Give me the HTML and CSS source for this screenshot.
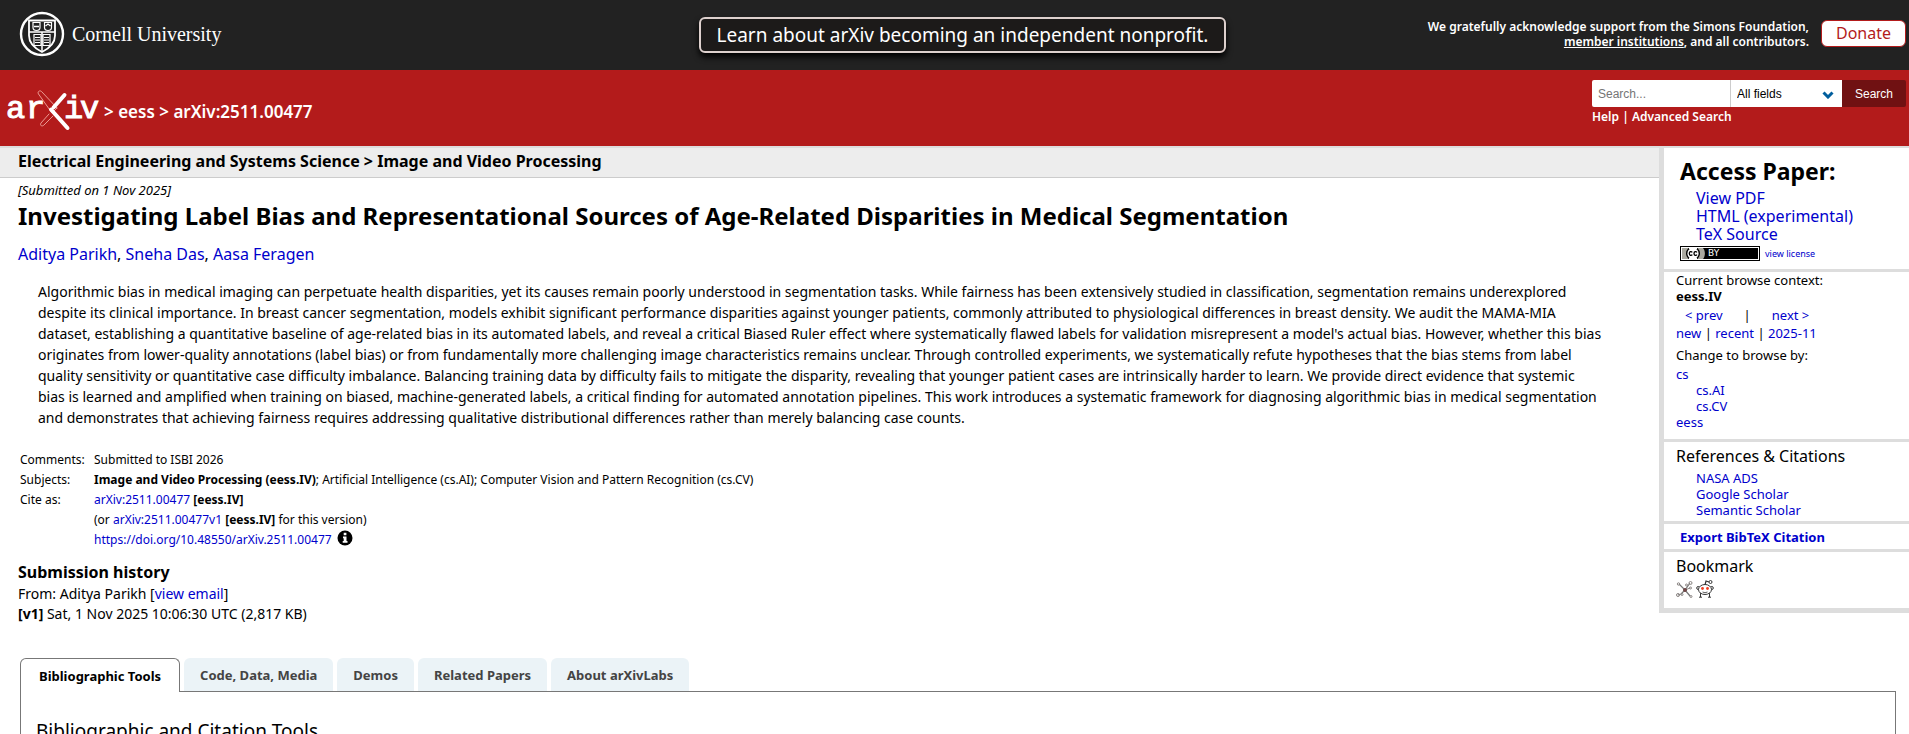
FILE: index.html
```
<!DOCTYPE html>
<html lang="en">
<head>
  <meta charset="utf-8">
  <title>[2511.00477] Investigating Label Bias and Representational Sources of Age-Related Disparities in Medical Segmentation</title>
  <link rel="stylesheet" href="styles.css">
</head>
<body>
  <header>
    <div class="support-bar">
      <a class="cornell" href="#">
        <svg width="46" height="46" viewBox="0 0 46 46" fill="none" stroke="#fff">
          <circle cx="23" cy="23" r="21" stroke-width="2.4"/>
          <path d="M10 9.500h26v15c0 7-5 12.500-13 16.500c-8-4-13-9.500-13-16.500z" stroke-width="1.800"/>
          <path d="M10 21h26M23 21v20" stroke-width="1.500"/>
          <path d="M14 11.500h7v5c0 2-1.500 3-3.500 3s-3.500-1-3.500-3zM25.500 11.500h7v5c0 2-1.500 3-3.500 3s-3.500-1-3.500-3z" stroke-width="1.200"/>
          <path d="M15 15.500h5M26.500 15l2.500-2l2.500 2" stroke-width="1.300"/>
          <path d="M15 23.500h7v11h-7zM24 23.500h7v11h-7z" stroke-width="1.200"/>
          <path d="M16 26.500h5M16 29h5M16 31.500h5M25 26.500h5M25 29h5M25 31.500h5" stroke-width="1"/>
        </svg>
        <span>Cornell University</span>
      </a>
      <a class="banner" href="#">Learn about arXiv becoming an independent nonprofit.</a>
      <div class="support">
        <p>We gratefully acknowledge support from the Simons Foundation,<br><a href="#">member institutions</a>, and all contributors.</p>
        <a class="donate" href="#">Donate</a>
      </div>
    </div>

    <div class="identity">
      <div class="breadcrumbs">
        <a href="#" aria-label="arXiv">
          <svg class="logo" width="92" height="44" viewBox="0 0 92 44">
            <g class="logo-text">
              <text x="-1" y="30">a</text>
              <text x="19" y="30">r</text>
              <text x="57" y="30">i</text>
              <text x="73" y="30">v</text>
            </g>
            <g fill="none" stroke="#fff" stroke-linecap="round">
              <path d="M50 20l-5 5L31.500 6c-1.500-2.500 1.500-4 3-2.500L50 20M42 26l-8 9c-1.500 2.500 1 4 3 2L46 28" stroke="#f0a8a0" stroke-width="0.900"/>
              <path d="M57.500 7L46.500 19.500" stroke-width="4"/>
              <path d="M44 21.500L60.500 40" stroke-width="4"/>
            </g>
          </svg>
        </a>
        <span>&gt; <a href="#">eess</a> &gt; arXiv:2511.00477</span>
      </div>
      <form class="search">
        <div class="search-row">
          <input type="text" placeholder="Search..." aria-label="Search term or terms">
          <div class="select">
            <select aria-label="Field to search">
              <option>All fields</option>
              <option>Title</option>
              <option>Author</option>
              <option>Abstract</option>
            </select>
            <svg width="12" height="8" viewBox="0 0 12 8"><path d="M1.500 1.500l4.500 4.500l4.500-4.500" fill="none" stroke="#005e9d" stroke-width="3"/></svg>
          </div>
          <button type="button">Search</button>
        </div>
        <p><a href="#">Help</a> | <a href="#">Advanced Search</a></p>
      </form>
    </div>
  </header>

  <div class="content">
    <main>
      <div class="subheader"><h1>Electrical Engineering and Systems Science &gt; Image and Video Processing</h1></div>
      <article>
        <div class="dateline">[Submitted on 1 Nov 2025]</div>
        <h1 class="title">Investigating Label Bias and Representational Sources of Age-Related Disparities in Medical Segmentation</h1>
        <div class="authors"><a href="#">Aditya Parikh</a>, <a href="#">Sneha Das</a>, <a href="#">Aasa Feragen</a></div>
        <blockquote class="abstract">
          Algorithmic bias in medical imaging can perpetuate health disparities, yet its causes remain poorly understood in segmentation tasks. While fairness has been extensively studied in classification, segmentation remains underexplored despite its clinical importance. In breast cancer segmentation, models exhibit significant performance disparities against younger patients, commonly attributed to physiological differences in breast density. We audit the MAMA-MIA dataset, establishing a quantitative baseline of age-related bias in its automated labels, and reveal a critical Biased Ruler effect where systematically flawed labels for validation misrepresent a model's actual bias. However, whether this bias originates from lower-quality annotations (label bias) or from fundamentally more challenging image characteristics remains unclear. Through controlled experiments, we systematically refute hypotheses that the bias stems from label quality sensitivity or quantitative case difficulty imbalance. Balancing training data by difficulty fails to mitigate the disparity, revealing that younger patient cases are intrinsically harder to learn. We provide direct evidence that systemic bias is learned and amplified when training on biased, machine-generated labels, a critical finding for automated annotation pipelines. This work introduces a systematic framework for diagnosing algorithmic bias in medical segmentation and demonstrates that achieving fairness requires addressing qualitative distributional differences rather than merely balancing case counts.
        </blockquote>
        <table class="metatable">
          <tr><td class="label">Comments:</td><td>Submitted to ISBI 2026</td></tr>
          <tr><td class="label">Subjects:</td><td><b>Image and Video Processing (eess.IV)</b>; Artificial Intelligence (cs.AI); Computer Vision and Pattern Recognition (cs.CV)</td></tr>
          <tr><td class="label">Cite as:</td><td><a href="#">arXiv:2511.00477</a> <b>[eess.IV]</b></td></tr>
          <tr><td></td><td>(or <a href="#">arXiv:2511.00477v1</a> <b>[eess.IV]</b> for this version)</td></tr>
          <tr><td></td><td><a href="#">https://doi.org/10.48550/arXiv.2511.00477</a>
            <svg class="info" width="16" height="16" viewBox="0 0 16 16"><circle cx="8" cy="8" r="7.500"/><path d="M6.700 2.800h2.700v2.400H6.700zM6 6.500h3.500v4.500h1v1.800H5.700V11h1V8.300H6z" fill="#fff"/></svg></td></tr>
        </table>
        <section class="history">
          <h2>Submission history</h2>
          <p>From: Aditya Parikh [<a href="#">view email</a>]</p>
          <p><b>[v1]</b> Sat, 1 Nov 2025 10:06:30 UTC (2,817 KB)</p>
        </section>
      </article>
    </main>

    <aside>
      <section class="access">
        <h2>Access Paper:</h2>
        <ul>
          <li><a href="#">View PDF</a></li>
          <li><a href="#">HTML (experimental)</a></li>
          <li><a href="#">TeX Source</a></li>
        </ul>
        <div class="license">
          <svg width="80" height="15" viewBox="0 0 80 15">
            <path d="M0 0h80v15H0z"/>
            <path d="M1 1h78v13H1z" fill="#fff"/>
            <path d="M2 2h76v11H2z"/>
            <path d="M2 2h21c2.500 3 2.500 8 0 11H2z" fill="#aaa9a0"/>
            <circle cx="13" cy="7.500" r="6.500" fill="#fff"/>
            <circle cx="13" cy="7.500" r="6.300" fill="none" stroke="#000" stroke-width="1.400"/>
            <path d="M9 1h8v2H9zM9 12h8v2H9z" fill="#fff"/>
            <path d="M12.300 6.300c-1-1.200-3-.7-3 1.200s2 2.400 3 1.200M17 6.300c-1-1.200-3-.7-3 1.200s2 2.400 3 1.200" fill="none" stroke="#000" stroke-width="1.300"/>
            <text class="by" x="28" y="10">BY</text>
          </svg>
          <a href="#">view license</a>
        </div>
      </section>
      <section class="browse">
        <div>Current browse context:</div>
        <div><b>eess.IV</b></div>
        <div class="prevnext"><a href="#">&lt; prev</a><span>|</span><a href="#">next &gt;</a></div>
        <div class="list"><a href="#">new</a> | <a href="#">recent</a> | <a href="#">2025-11</a></div>
        <div class="change">Change to browse by:</div>
        <a href="#">cs</a>
        <ul>
          <li><a href="#">cs.AI</a></li>
          <li><a href="#">cs.CV</a></li>
        </ul>
        <a href="#">eess</a>
      </section>
      <section class="refs">
        <h3>References &amp; Citations</h3>
        <ul>
          <li><a href="#">NASA ADS</a></li>
          <li><a href="#">Google Scholar</a></li>
          <li><a href="#">Semantic Scholar</a></li>
        </ul>
      </section>
      <section class="export"><a href="#">Export BibTeX Citation</a></section>
      <section class="bookmark">
        <h3>Bookmark</h3>
        <a href="#" aria-label="BibSonomy"><svg width="17" height="18" viewBox="0 0 17 18" fill="none" stroke="#8a8583">
          <path d="M3 4l6 6l5 6M2 15l3-1l4-4l5-7" stroke="#777" stroke-width="1.200"/>
          <path d="M9 10l5-2"/>
          <circle cx="2.500" cy="4" r="1.200"/><circle cx="14.500" cy="3" r="1.500"/><circle cx="10.500" cy="5" r="1"/><circle cx="14.500" cy="8" r="1"/>
          <circle cx="2" cy="15" r="1.500"/><circle cx="6" cy="14.500" r="1"/><circle cx="15" cy="16.500" r="1"/>
          <circle cx="9" cy="10" r="1.500" fill="#704848" stroke="#704848"/>
        </svg></a>
        <a href="#" aria-label="Reddit"><svg width="18" height="18" viewBox="0 0 18 18" fill="#fff" stroke="#333">
          <path d="M9 5l1-4l3 1" fill="none" stroke-width="1.200"/>
          <circle cx="14.500" cy="2" r="1.500"/>
          <path d="M4.500 12v5M13.500 12v5M3 17.200h3M12 17.200h3"/>
          <circle cx="2.200" cy="8" r="1.500"/><circle cx="15.800" cy="8" r="1.500"/>
          <ellipse cx="9" cy="9.500" rx="6.500" ry="5"/>
          <circle cx="6.500" cy="8.500" r="1.400" fill="#f03c20" stroke="none"/><circle cx="11.500" cy="8.500" r="1.400" fill="#f03c20" stroke="none"/>
          <path d="M6.500 12q2.500 1.500 5 0" fill="none" stroke-width="0.800"/>
        </svg></a>
      </section>
    </aside>
  </div>

  <div class="labs">
    <div class="tabs">
      <button class="active">Bibliographic Tools</button>
      <button>Code, Data, Media</button>
      <button>Demos</button>
      <button>Related Papers</button>
      <button>About arXivLabs</button>
    </div>
    <div class="panel">
      <h2>Bibliographic and Citation Tools</h2>
    </div>
  </div>
</body>
</html>
```
FILE: styles.css
```
* { box-sizing: border-box; }
html { overflow: hidden; }
body { margin: 0; height: 100vh; overflow: hidden; font: 13px/16px "Noto Sans", "Open Sans", sans-serif; color: #000; background: #fff; }
a { color: #0000cc; text-decoration: none; }
h1, h2, h3, p, ul { margin: 0; padding: 0; }
ul { list-style: none; }

/* top bar */
.support-bar { display: grid; grid-template-columns: 1fr auto 1fr; align-items: center; height: 70px; padding: 0 3px 3px 19px; background: #222; color: #fff; }
.cornell { display: flex; align-items: center; gap: 7px; color: #fff; font: 20px/24px "Liberation Serif", serif; }
.banner { margin-top: 3px; padding: 3px 16px; border: 2px solid #ddd0cd; border-radius: 6px; background: #1c1a19; box-shadow: 0 4px 6px #000; color: #fff; font-size: 19px; line-height: 26px; }
.support { display: flex; align-items: center; justify-content: flex-end; gap: 12px; font-size: 12px; font-weight: 600; line-height: 15px; text-align: right; }
.support p a { color: #fff; text-decoration: underline; }
.donate { padding: 0 14px; border: 1px solid #b31b1b; border-radius: 6px; background: #fff; color: #b31b1b; font-size: 16px; font-weight: normal; line-height: 25px; }

/* red bar */
.identity { display: flex; justify-content: space-between; height: 78px; padding: 10px 3px 0 7px; border-bottom: 2px solid #ddd; background: #b31b1b; color: #fff; }
.identity a { color: #fff; }
.breadcrumbs { display: flex; gap: 5px; font-size: 17px; font-weight: 600; line-height: 24px; }
.breadcrumbs span { padding-top: 20px; }
.logo { display: block; margin-top: 8px; overflow: visible; }
.logo-text { font: 32px "Liberation Mono", monospace; fill: #fff; stroke: #fff; stroke-width: 1px; }
.search { font-size: 12px; font-weight: 600; }
.search p { padding-top: 2px; }
.search-row { display: flex; height: 27px; }
.search-row input { width: 138px; padding: 0 6px; border: 0; border-radius: 2px 0 0 2px; font: 12px "Liberation Sans", sans-serif; }
.search-row input::placeholder { color: #757575; }
.select { position: relative; width: 112px; }
.select select { width: 100%; height: 100%; padding: 0 6px; border: 0; border-left: 1px solid #ccc; background: #fff; color: #000; font: 12px "Liberation Sans", sans-serif; appearance: none; }
.select svg { position: absolute; right: 8px; top: 11px; pointer-events: none; }
.search-row button { width: 64px; border: 0; border-radius: 0 2px 2px 0; background: #701112; color: #fff; font: 12px "Liberation Sans", sans-serif; }

/* paper */
.content { display: grid; grid-template-columns: 1fr 250px; align-items: start; }
.subheader { height: 30px; padding: 0 18px; border-bottom: 1px solid #ccc; background: #ededed; }
.subheader h1 { font-size: 16px; line-height: 27px; }
article { padding: 0 18px; }
.dateline { padding-top: 4px; font-size: 13px; font-style: italic; }
.title { margin-top: 2px; font-size: 24px; line-height: 32px; }
.authors { margin-top: 10px; font-size: 16px; line-height: 24px; }
.abstract { margin: 15px 38px 22px 20px; font-size: 14px; line-height: 21px; }
.metatable { border-collapse: collapse; font-size: 12px; line-height: 20px; }
.metatable td { padding: 0 0 0 2px; height: 20px; vertical-align: top; }
.metatable .label { width: 74px; }
.info { margin-left: 2px; vertical-align: -2px; }
.history { padding-top: 10px; font-size: 14px; line-height: 20px; }
.history h2 { font-size: 16px; line-height: 24px; }

/* right column */
aside { border-left: 5px solid #ddd; border-bottom: 5px solid #ddd; }
aside section { padding: 0 12px; border-bottom: 3px solid #ddd; }
aside section:last-child { border-bottom: 0; }
aside ul { padding-left: 20px; }
aside h3 { font-size: 16px; font-weight: normal; line-height: 24px; }
aside .access { height: 124px; padding: 8px 16px 0; }
.access h2 { font-size: 23px; line-height: 30px; }
.access ul { padding: 3px 0 3px 16px; font-size: 16px; line-height: 18px; }
.license { display: flex; align-items: center; gap: 5px; font-size: 9px; line-height: 14px; }
.by { font: 9px "DejaVu Sans", sans-serif; fill: #fff; }
aside .browse { height: 170px; }
.prevnext { display: flex; gap: 21px; padding: 3px 9px 0; }
.list { padding-top: 2px; }
.change { padding: 6px 0 3px; }
aside .refs { height: 82px; padding-top: 2px; }
.refs h3 { margin-bottom: 2px; }
aside .export { padding: 5px 16px; height: 28px; font-weight: bold; }
aside .bookmark { height: 56px; padding-top: 2px; }
.bookmark h3 { margin-bottom: 2px; }
.bookmark a { display: inline-block; }

/* labs tabs */
.labs { padding: 34px 13px 0 20px; }
.tabs { display: flex; gap: 4px; }
.tabs button { height: 33px; padding: 0 16px; border: 0; border-radius: 6px 6px 0 0; background: #ebf3f7; color: #444; font: bold 13px "Noto Sans", sans-serif; }
.tabs .active { position: relative; height: 34px; margin-bottom: -1px; padding: 0 18px; border: 1px solid #777; border-bottom: 0; background: #fff; color: #000; }
.panel { height: 200px; padding: 26px 15px; border: 1px solid #777; }
.panel h2 { font-size: 19px; font-weight: normal; line-height: 26px; }
```
